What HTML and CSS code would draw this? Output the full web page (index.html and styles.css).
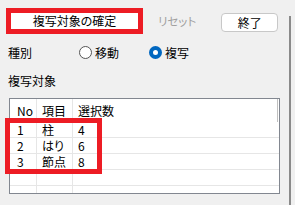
FILE: index.html
```html
<!DOCTYPE html>
<html lang="ja">
<head>
<meta charset="utf-8">
<link rel="stylesheet" href="styles.css">
</head>
<body>
<div class="page">
  <div class="main">
    <div class="topbar">
      <div class="mark-btn"><button class="btn confirm">複写対象の確定</button></div>
      <span class="reset">リセット</span>
      <button class="btn close">終了</button>
    </div>
    <div class="kind">
      <span class="label">種別</span>
      <label class="radio"><span class="dot"></span>移動</label>
      <label class="radio on"><span class="dot"></span>複写</label>
    </div>
    <div class="section">複写対象</div>
    <div class="grid-wrap">
      <div class="grid">
        <div class="row head"><span class="c1">No</span><span class="c2">項目</span><span class="c3">選択数</span></div>
        <div class="row"><span class="c1">1</span><span class="c2">柱</span><span class="c3">4</span></div>
        <div class="row"><span class="c1">2</span><span class="c2">はり</span><span class="c3">6</span></div>
        <div class="row"><span class="c1">3</span><span class="c2">節点</span><span class="c3">8</span></div>
        <div class="row"><span class="c1"></span><span class="c2"></span><span class="c3"></span></div>
        <div class="row"><span class="c1"></span><span class="c2"></span><span class="c3"></span></div>
      </div>
      <div class="mark-rows"></div>
    </div>
  </div>
  <div class="rail"></div>
</div>
</body>
</html>
```
FILE: styles.css
```css
html, body {
  margin: 0;
  padding: 0;
  background: #f0f0f0;
}
body {
  font-family: "Noto Sans CJK JP", "Noto Sans", sans-serif;
  font-size: 12px;
  color: #000;
  width: 295px;
  height: 205px;
  overflow: hidden;
  font-feature-settings: "palt";
}
.page {
  display: flex;
  height: 205px;
}
.main {
  width: 283px;
  padding: 8px 0 0 6px;
}
.rail {
  width: 2px;
  margin-left: 0;
  margin-top: 16px;
  background: #8a8a8a;
}
.topbar {
  display: flex;
  align-items: center;
  height: 26px;
}
.mark-btn {
  border: 5px solid #ed1c24;
  width: 127px;
  height: 16px;
  display: flex;
}
.btn {
  font: inherit;
  background: #fff;
  color: #000;
  padding: 0;
  line-height: 16px;
}
.confirm {
  border: none;
  width: 100%;
  height: 16px;
}
.reset {
  margin-left: 15px;
  color: #a0a0a0;
  font-size: 11.5px;
}
.close {
  margin-left: 25px;
  width: 57px;
  height: 19px;
  border: 1px solid #c8c8c8;
  border-radius: 4px;
  margin-top: 3px;
}
.kind {
  display: flex;
  align-items: center;
  height: 20px;
  margin-top: 8px;
  padding-left: 2px;
}
.label {
  width: 71px;
}
.radio {
  display: flex;
  align-items: center;
  gap: 3px;
  margin-right: 30px;
}
.dot {
  width: 11px;
  height: 11px;
  border: 1px solid #555;
  border-radius: 50%;
  box-sizing: content-box;
  background: #fff;
}
.radio.on .dot {
  width: 5px;
  height: 5px;
  border: 4px solid #0067c0;
  background: #fff;
}
.section {
  margin-top: 10px;
  height: 18px;
  line-height: 18px;
  padding-left: 2px;
}
.grid-wrap {
  position: relative;
  margin-top: 8px;
  margin-left: 3px;
  width: 271px;
}
.grid {
  height: 94px;
  border: 1px solid #828790;
  background: #fff;
  overflow: hidden;
}
.row {
  display: flex;
  height: 15px;
  line-height: 15px;
  border-bottom: 1px solid #e6e6e6;
}
.row.head {
  height: 23px;
  line-height: 23px;
  border-bottom: none;
}
.row span {
  box-sizing: border-box;
  border-right: 1px solid #e6e6e6;
  padding-left: 5px;
}
.c1 { width: 27px; padding-left: 7px !important; }
.c2 { width: 36px; }
.c3 { flex: 1; border-right: none !important; }
.row.head .c3 {
  margin-right: 1px;
  border-right: 1px solid #c0c0c0 !important;
}
.mark-rows {
  position: absolute;
  left: -4px;
  top: 20px;
  width: 87px;
  height: 46px;
  border: 5px solid #ed1c24;
}
```
